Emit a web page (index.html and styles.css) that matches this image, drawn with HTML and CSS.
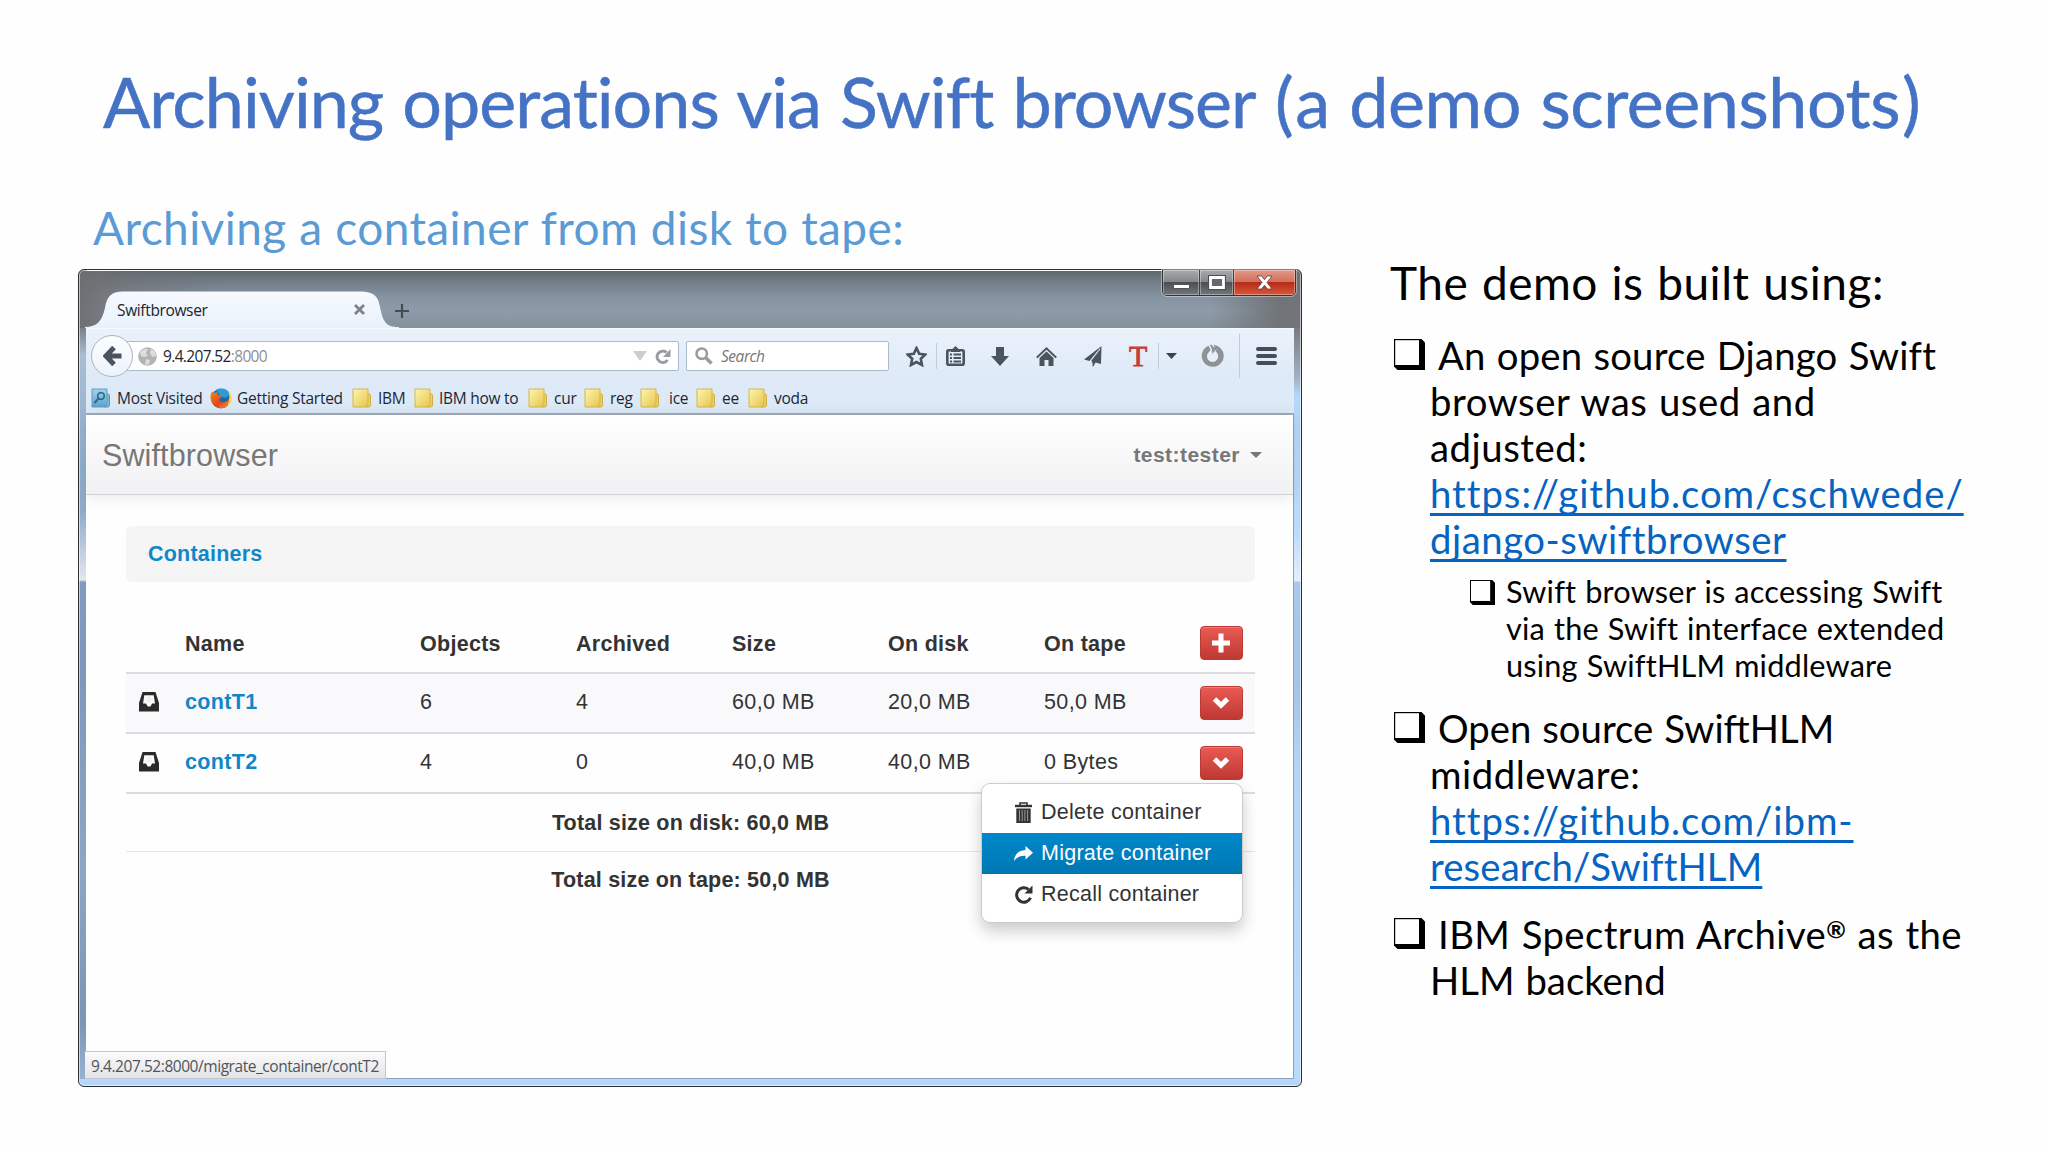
FILE: index.html
```html
<!DOCTYPE html>
<html lang="en">
<head>
<meta charset="utf-8">
<title>Archiving operations via Swift browser</title>
<link rel="stylesheet" href="styles.css">
</head>
<body>
<svg class="defs" width="0" height="0" aria-hidden="true">
  <defs>
    <linearGradient id="tabFill" x1="0" y1="0" x2="0" y2="1"><stop offset="0" stop-color="#f7faff"/><stop offset="1" stop-color="#e8f1fb"/></linearGradient>
    <linearGradient id="folderFill" x1="0" y1="0" x2="1" y2="1"><stop offset="0" stop-color="#fdf5b0"/><stop offset="1" stop-color="#e9c54c"/></linearGradient>
    <linearGradient id="blueFill" x1="0" y1="0" x2="0" y2="1"><stop offset="0" stop-color="#a5d3ea"/><stop offset="1" stop-color="#5fa3c9"/></linearGradient>
    <linearGradient id="foxFill" x1="0" y1="0" x2="1" y2="1"><stop offset="0" stop-color="#f08a1c"/><stop offset=".55" stop-color="#e2451b"/><stop offset="1" stop-color="#f9a23c"/></linearGradient>
  </defs>
  <symbol id="folder" viewBox="0 0 19 20"><path d="M14 6h3q1.500 0 1.500 1.500V17q0 2-2 2H13z" fill="#ecd05e" stroke="#cfae45"/><path d="M1 1h15v14q0 4-3 4H1z" fill="url(#folderFill)" stroke="#d3b84f"/></symbol>
  <symbol id="box" viewBox="0 0 31 31"><path d="M0 0H27.500L31 3.500V31H3.500L0 27.500z" fill="#000"/><path d="M1.200 1.200H25V26H1.200z" fill="#fff"/></symbol>
  <symbol id="inbox" viewBox="0 0 20 20"><path fill-rule="evenodd" d="M3.500 0h13L20 11v8.500H0V11zM5.300 3.200 4 11.500h3l1.700 3h2.700l1.700-3H16L14.700 3.200z" fill="#2b2b2b"/><path d="M8.300 4.500h3.400v3h2L10 11 6.300 7.500h2z" fill="#e5e5e5" opacity=".5"/></symbol>
  <symbol id="chev" viewBox="0 0 20 14"><path d="M2.500 3 9 9.200l6.500-6.200" fill="none" stroke="#fff" stroke-width="5"/></symbol>
</svg>

<h1 class="title">Archiving operations via Swift browser <span class="title-end"><span class="paren">(</span>a demo screenshots<span class="paren">)</span></span></h1>

<main class="slide">
  <section class="demo">
    <h2 class="subtitle">Archiving a container from disk to tape:</h2>
    <div class="window">
      <div class="titlebar">
        <div class="tab">
          <svg class="tab-shape" width="314" height="37" viewBox="0 0 314 37"><path d="M0 37V36C12 36 17 30 20 17 22 5 26 1 38 .500H276C288 1 293 4 295 16 298 31 301 36 314 36V37z" fill="url(#tabFill)"/></svg>
          <span class="tab-name">Swiftbrowser</span>
          <svg width="11" height="11" viewBox="0 0 11 11"><path d="M1 1l9 9M10 1l-9 9" stroke="#7d8288" stroke-width="2.800"/></svg>
        </div>
        <svg class="newtab" width="14" height="14" viewBox="0 0 14 14"><path d="M7 0v14M0 7h14" stroke="#454c54" stroke-width="2.200"/></svg>
        <div class="winbtns">
          <span class="wb wb-min"><svg width="17" height="5" viewBox="0 0 17 5"><path d="M.5.5h16v4H.5z" fill="#fff" stroke="#555"/></svg></span>
          <span class="wb wb-max"><svg width="18" height="15" viewBox="0 0 18 15"><path d="M2 2h14v11H2z" fill="none" stroke="#4a4f52" stroke-width="4"/><path d="M2.500 2.500h13v10h-13z" fill="#62686c" stroke="#fff" stroke-width="2.800"/></svg></span>
          <span class="wb wb-close"><svg width="17" height="15" viewBox="0 0 17 15"><path d="M1 1h4.500l3 3.700L11.500 1H16l-5 6.500L16 14h-4.500l-3-3.700-3 3.700H1l5-6.500z" fill="#fff" stroke="#6d3b35" stroke-width=".8"/></svg></span>
        </div>
      </div>

      <div class="chrome">
        <div class="toolbar">
          <span class="back"><svg width="19" height="20" viewBox="0 0 19 20"><path d="M11 1.500 3 10l8 8.500M3 10h15.500" fill="none" stroke="#4b545c" stroke-width="5"/></svg></span>
          <div class="url">
            <svg width="19" height="19" viewBox="0 0 19 19"><circle cx="9.500" cy="9.500" r="9.300" fill="#b1b3b5"/><path d="M2 5C4 2 8 1 10 2L8 6l2 3-4 1-3-1zM13 2c3 1 5 4 5 7l-4 1-2-4zM8 12l4 1-1 4-4 1z" fill="#dcdddf"/></svg>
            <span class="addr">9.4.207.52<span class="port">:8000</span></span>
            <svg class="drop" width="14" height="10" viewBox="0 0 14 10"><path d="M0 0h14L7 10z" fill="#cbcdcf"/></svg>
            <svg class="reload" width="16" height="17" viewBox="0 0 16 17"><path d="M11.500 4.500A5.700 5.700 0 1 0 12.500 12" fill="none" stroke="#999c9f" stroke-width="3"/><path d="M15.500 1v8H8z" fill="#999c9f"/></svg>
          </div>
          <div class="search">
            <svg width="18" height="18" viewBox="0 0 18 18"><circle cx="6.700" cy="6.700" r="5.200" fill="none" stroke="#9a9da0" stroke-width="2.600"/><path d="M10.500 10.500 16.500 16.500" stroke="#9a9da0" stroke-width="3.600"/></svg>
            <span>Search</span>
          </div>
          <svg class="i-star" width="21" height="21" viewBox="0 0 21 21"><path d="M10.500 2l2.700 5.700 6.200.8-4.600 4.300 1.200 6.200-5.500-3-5.500 3 1.200-6.200L1.600 8.500l6.200-.8z" fill="none" stroke="#4b545c" stroke-width="2.600"/></svg>
          <i class="sep sep-a"></i>
          <svg class="i-clip" width="19" height="20" viewBox="0 0 19 20"><rect x="1.300" y="4.300" width="16.400" height="14.400" rx="1.500" fill="none" stroke="#4b545c" stroke-width="2.600"/><path d="M5 4.500 7.500 2 9.500 0l2 2L14 4.500V6H5z" fill="#4b545c"/><path d="M4 8.500h2M7.500 8.500H15M4 12h2M7.500 12H15M4 15.500h2M7.500 15.500H15" stroke="#4b545c" stroke-width="1.900"/></svg>
          <svg class="i-down" width="18" height="19" viewBox="0 0 18 19"><path d="M5 0h8v9h5l-9 10L0 9h5z" fill="#4b545c"/></svg>
          <svg class="i-home" width="21" height="19" viewBox="0 0 21 19"><path d="M10.500 0 21 10l-1.500 1.200-9-8.500-9 8.500L0 10z" fill="#4b545c"/><path d="M10.500 4.500 17.500 11v8H12.500v-6H8.500v6H3.500v-8z" fill="#4b545c"/></svg>
          <svg class="i-plane" width="18" height="21" viewBox="0 0 18 21"><path d="M17.500 0 0 13.500l5.500 1.500z" fill="#4b545c"/><path d="M17.500 0 7 14.500 9 21l2.500-4.500L17 18z" fill="#4b545c"/><path d="M16 3 7 14.500 8.500 18.500" fill="none" stroke="#dfe9f4" stroke-width="1"/></svg>
          <span class="i-t">T</span>
          <i class="sep sep-b"></i>
          <svg class="i-caret" width="11" height="6" viewBox="0 0 11 6"><path d="M0 0h11L5.500 6z" fill="#3a424a"/></svg>
          <svg class="i-ring" width="23" height="24" viewBox="0 0 23 24"><path fill-rule="evenodd" d="M10 .5 8 1.500A11 11 0 1 0 14.500 1.200L12.500.5 15 5.500 11.500 8.500 9.500 5.500 8.500 7.500A5.500 5.500 0 1 0 14.700 7.500L15.500 5.500 10 .500z" fill="#909396"/><circle cx="11.500" cy="12.500" r="5.300" fill="#e6effa"/><path d="M8 1l2.800 5.500" stroke="#e6effa" stroke-width="1.500"/><path d="M11 2.500 16 4.500 11.300 10z" fill="#909396"/></svg>
          <i class="sep sep-c"></i>
          <svg class="i-menu" width="21" height="18" viewBox="0 0 21 18"><path d="M2 2h17M2 9h17M2 16h17" stroke="#454e57" stroke-width="4" stroke-linecap="round"/></svg>
        </div>
        <div class="bookmarks">
          <svg class="b1" width="19" height="20" viewBox="0 0 19 20"><path d="M14 6h3q1.500 0 1.500 1.500V17q0 2-2 2H13z" fill="#7fb9d8" stroke="#5795b8"/><path d="M1 1h15v14q0 4-3 4H1z" fill="url(#blueFill)" stroke="#5d9fc2"/><circle cx="10" cy="8" r="3.300" fill="none" stroke="#2f6d92" stroke-width="1.700"/><path d="M7.500 10.500 3.500 15" stroke="#2f6d92" stroke-width="2.200"/></svg>
          <span class="t1">Most Visited</span>
          <svg class="b2" width="22" height="21" viewBox="0 0 22 21"><circle cx="11" cy="10.500" r="9.800" fill="#1b66a8"/><path d="M6 2C11-1 18 1 20 6l-4 4-6-2z" fill="#2f9ad4"/><path d="M2 3.500C-.5 7 0 14 4 17.500c5 4.500 14 3.500 16.500-4C21.500 10 21 7 19.500 5c.5 4-1 8-4.500 9-4 .800-6.500-1-5.500-3.500l3-1C11 7 9 7.500 8 7L7 4 4 5z" fill="url(#foxFill)"/><path d="M18.500 3.500c3.500 3 4 8 1.500 12l-3 3c2.500-5 3-9 1.500-15z" fill="#f8d25a"/></svg>
          <span class="t2">Getting Started</span>
          <svg class="f f1" width="19" height="20"><use href="#folder"/></svg><span class="t3">IBM</span>
          <svg class="f f2" width="19" height="20"><use href="#folder"/></svg><span class="t4">IBM how to</span>
          <svg class="f f3" width="19" height="20"><use href="#folder"/></svg><span class="t5">cur</span>
          <svg class="f f4" width="19" height="20"><use href="#folder"/></svg><span class="t6">reg</span>
          <svg class="f f5" width="19" height="20"><use href="#folder"/></svg><span class="t7">ice</span>
          <svg class="f f6" width="19" height="20"><use href="#folder"/></svg><span class="t8">ee</span>
          <svg class="f f7" width="19" height="20"><use href="#folder"/></svg><span class="t9">voda</span>
        </div>
      </div>

      <div class="page">
        <div class="navbar">
          <span class="brand">Swiftbrowser</span>
          <span class="user">test:tester <svg width="12" height="6" viewBox="0 0 12 6"><path d="M0 0h12L6 6z" fill="#777"/></svg></span>
        </div>
        <div class="content">
          <div class="crumb">Containers</div>
          <div class="table">
            <div class="row head"><span></span><span>Name</span><span>Objects</span><span>Archived</span><span>Size</span><span>On disk</span><span>On tape</span><span class="btn"><svg width="20" height="20" viewBox="0 0 20 20"><path d="M9 .500v19M0 10h18" stroke="#fff" stroke-width="5"/></svg></span></div>
            <div class="row odd"><svg class="inbox" width="20" height="20"><use href="#inbox"/></svg><span class="name">contT1</span><span>6</span><span>4</span><span>60,0 MB</span><span>20,0 MB</span><span>50,0 MB</span><span class="btn"><svg width="20" height="14"><use href="#chev"/></svg></span></div>
            <div class="row"><svg class="inbox" width="20" height="20"><use href="#inbox"/></svg><span class="name">contT2</span><span>4</span><span>0</span><span>40,0 MB</span><span>40,0 MB</span><span>0 Bytes</span><span class="btn"><svg width="20" height="14"><use href="#chev"/></svg></span></div>
            <div class="total first">Total size on disk: 60,0 MB</div>
            <div class="total">Total size on tape: 50,0 MB</div>
          </div>
        </div>
        <div class="menu">
          <div class="item"><svg width="19" height="21" viewBox="0 0 19 21"><path d="M6 3V1h7v2" fill="none" stroke="#333" stroke-width="1.600"/><path d="M1 2.800h17v2.400H1z" fill="#333"/><path d="M2.300 6.500h14.400V21H2.300z" fill="#333"/><path d="M5.500 8v11M8.200 8v11M10.900 8v11M13.600 8v11" stroke="#9a9a9a" stroke-width="1"/></svg>Delete container</div>
          <div class="item active"><svg width="19" height="15" viewBox="0 0 19 15"><path d="M11.500 0 19 6.800l-7.500 6.700V9.700C6 9.500 3 11 0 15 .300 8.500 4.500 4.200 11.500 3.900z" fill="#fff"/></svg>Migrate container</div>
          <div class="item"><svg width="19" height="19" viewBox="0 0 19 19"><path d="M14.500 4.500A7.200 7.200 0 1 0 16.500 12.700" fill="none" stroke="#333" stroke-width="3"/><path d="M18.500.500v8h-8z" fill="#333"/></svg>Recall container</div>
        </div>
        <div class="status">9.4.207.52:8000/migrate_container/contT2</div>
      </div>
    </div>
  </section>

  <section class="notes">
    <h2 class="lead">The demo is built using:</h2>
    <ul class="list">
      <li class="pt">
        <div class="first-line"><svg class="bullet" width="31" height="31"><use href="#box"/></svg><span>An open source Django Swift</span></div>
        <div class="wide">browser was used and</div>
        <div class="wide">adjusted:</div>
        <div><a class="url-a">https://github.com/cschwede/</a></div>
        <div><a class="url-b">django-swiftbrowser</a></div>
      </li>
      <li class="sub">
        <div class="first-line"><svg class="bullet" width="25" height="25" viewBox="0 0 31 31"><use href="#box"/></svg><span>Swift browser is accessing Swift</span></div>
        <div>via the Swift interface extended</div>
        <div>using SwiftHLM middleware</div>
      </li>
      <li class="pt second">
        <div class="first-line"><svg class="bullet" width="31" height="31"><use href="#box"/></svg><span class="tight">Open source SwiftHLM</span></div>
        <div class="wide">middleware:</div>
        <div><a class="url-a">https://github.com/ibm-</a></div>
        <div><a class="url-c">research/SwiftHLM</a></div>
      </li>
      <li class="pt third">
        <div class="first-line"><svg class="bullet" width="31" height="31"><use href="#box"/></svg><span class="mark-line">IBM Spectrum Archive<span class="reg">®</span> as the</span></div>
        <div class="tight">HLM backend</div>
      </li>
    </ul>
  </section>
</main>
</body>
</html>
```
FILE: styles.css
```css
* { box-sizing: border-box; }
body { margin: 0; width: 2048px; height: 1152px; overflow: hidden; background: #fefefe; font-family: Lato, Carlito, sans-serif; color: #000; }
svg { display: block; flex: none; }
.defs { position: absolute; }
h1, h2, ul { margin: 0; padding: 0; font-weight: 400; list-style: none; }

.title { margin: 56px 0 0 103px; font-size: 70px; line-height: 90px; letter-spacing: -.0138em; word-spacing: .03em; color: #4472c4; white-space: nowrap; -webkit-text-stroke: .5px #4472c4; }
.title-end { letter-spacing: -.0065em; }
.paren { margin: 0 2px; }
.slide { display: flex; margin-top: 56px; padding-left: 78px; }
.demo { width: 1224px; flex: none; }
.subtitle { padding-left: 15px; font-size: 46px; line-height: 51px; margin-bottom: -1px; letter-spacing: .009em; word-spacing: .01em; color: #5b9bd5; white-space: nowrap; }

/* Browser window */
.window {
  display: flex; flex-direction: column; width: 1224px; height: 818px; margin-top: 17px; padding: 0 7px 7px;
  border: 1px solid #2c3036; border-radius: 6px;
  background:
    linear-gradient(#b9dafc, #b4d3f7) bottom / 100% 7px no-repeat,
    linear-gradient(#77797c 0, #77797c 55px, #a9bdd3 85px, #8fb0d0 200px, #8ea9c8 240px, #e3e7ee 310px, #7f9bbd 312px, #7d98ba 400px, #8ba6c6 600px, #7b95b5 750px, #9ab5d8 100%) left / 8px 100% no-repeat,
    linear-gradient(#66696d 0, #77797c 55px, #a3b4c8 110px, #b3d6fb 125px, #b9dafb 260px, #e4f0fb 311px, #a9c8eb 312px, #a7c4e6 420px, #b5d5f8 500px, #b9dafc 100%) right / 8px 100% no-repeat;
  box-shadow: inset 0 0 0 1px rgba(255,255,255,.55);
}
.titlebar {
  display: flex; flex: none; height: 57px; margin: 1px -6px 0; padding-left: 7px; border-radius: 5px 5px 0 0; position: relative;
  background:
    linear-gradient(90deg, rgba(110,110,113,.95) 0, rgba(110,110,113,.5) 45px, rgba(110,110,113,0) 150px, rgba(110,110,113,0) 1130px, rgba(110,112,115,.9) 1200px),
    linear-gradient(#5e676b 0, #707c86 10px, #8693a1 26px, #8e9baa 40px, #83919b 100%);
}
.tab { position: relative; display: flex; align-items: center; width: 314px; height: 37px; margin: 20px 0 0 -2px; }
.tab > * { position: relative; }
.tab > .tab-shape { position: absolute; inset: 0; }
.tab-name { width: 237px; margin-left: 32px; font: 15.5px/20px "Open Sans", sans-serif; letter-spacing: -.023em; color: #20242a; }
.newtab { margin: 33px 0 0 -4px; }
.winbtns { position: absolute; right: 4px; top: -1px; display: flex; height: 26px; border: 1px solid #30353a; outline: 1px solid rgba(255,255,255,.4); border-top: 0; border-radius: 0 0 5px 5px; overflow: hidden; }
.wb { display: flex; align-items: center; justify-content: center; height: 100%; border-right: 1px solid #3c4145; background: linear-gradient(#a9acae 0, #83878a 48%, #4b5053 50%, #71777b 100%); box-shadow: inset 0 0 0 1px rgba(255,255,255,.35); }
.wb-min { width: 37px; padding-top: 8px; }
.wb-max { width: 34px; }
.wb-close { width: 61px; border-right: 0; background: linear-gradient(#e09a88 0, #d4705c 46%, #b92b16 50%, #d4593d 100%); }

.chrome { flex: none; height: 87px; background: linear-gradient(#eaf2fb, #dfeaf7 45px, #dce9f7); border-top: 1px solid #f4faff; border-bottom: 2px solid #a3abba; }
.toolbar { display: flex; align-items: center; height: 55px; padding-bottom: 1px; }
.back { position: relative; z-index: 1; display: flex; align-items: center; justify-content: center; width: 42px; height: 42px; margin-left: 5px; border: 1.500px solid #a9b4c2; border-radius: 50%; background: linear-gradient(#fbfdff, #eef3fa); flex: none; }
.url { display: flex; align-items: center; width: 555px; height: 30px; margin-left: -9px; padding-left: 13px; border: 1px solid #a9bace; border-radius: 2px; background: #fff; flex: none; }
.addr { width: 470px; margin-left: 6px; font: 15.5px/20px "Open Sans", sans-serif; letter-spacing: -.042em; color: #22262b; }
.port { color: #8c9094; }
.reload { margin-left: 8px; }
.search { display: flex; align-items: center; gap: 8px; width: 203px; height: 30px; margin-left: 7px; padding-left: 8px; border: 1px solid #a9bace; border-radius: 2px; background: #fff; font: italic 15.5px/20px "Open Sans", sans-serif; letter-spacing: -.03em; color: #777; flex: none; }
.i-star { margin-left: 17px; }
.sep { width: 1px; height: 26px; background: #c0ccda; flex: none; }
.sep-a { margin-left: 9px; }
.i-clip { margin-left: 9px; }
.i-down { margin-left: 26px; }
.i-home { margin-left: 27px; }
.i-plane { margin-left: 27px; }
.i-t { width: 18px; margin-left: 28px; font: 30px/30px "Liberation Serif", serif; color: #c63e31; text-indent: -1px; -webkit-text-stroke: .8px #c63e31; }
.sep-b { margin-left: 10px; }
.i-caret { margin-left: 7px; }
.i-ring { margin-left: 24px; }
.sep-c { height: 44px; margin-left: 15px; }
.i-menu { margin-left: 16px; }

.bookmarks { display: flex; align-items: center; height: 28px; font: 15.5px/20px "Open Sans", sans-serif; letter-spacing: -.016em; color: #1d2733; white-space: nowrap; }
.bookmarks span { flex: none; }
.b1 { margin-left: 5px; }
.t1 { width: 93px; margin-left: 7px; }
.t2 { width: 115px; margin-left: 5px; }
.t3 { width: 36px; margin-left: 7px; }
.t4 { width: 89px; margin-left: 6px; letter-spacing: -.018em; }
.t5 { width: 30px; margin-left: 7px; }
.t6 { width: 30px; margin-left: 7px; }
.t7 { width: 27px; margin-left: 10px; }
.t8 { width: 26px; margin-left: 7px; }
.t9 { margin-left: 7px; }

/* Page inside the browser */
.page { position: relative; display: flex; flex-direction: column; flex: 1; background: #fefefe; font-family: "Liberation Sans", Arial, sans-serif; color: #333; border: solid #8ba3bf; border-width: 0 1px 1px 0; }
.navbar { display: flex; align-items: center; justify-content: space-between; height: 80px; padding: 0 31px 0 16px; border-bottom: 1px solid #d2d2d4; background: linear-gradient(#fff, #f1f1f3); box-shadow: 0 1px 15px rgba(0,0,0,.1); color: #777; }
.brand { font-size: 30.5px; line-height: 40px; letter-spacing: .004em; }
.user { display: flex; align-items: center; gap: 10px; font-size: 21px; line-height: 28px; font-weight: 700; letter-spacing: .022em; }
.content { padding: 31px 38px 0 40px; font-size: 21.500px; line-height: 26px; }
.crumb { width: 1129px; height: 56px; padding: 15px 0 0 22px; border-radius: 6px; background: #f5f5f6; font-weight: 700; letter-spacing: .01em; color: #0f87c9; }
.table { width: 1129px; margin-top: 30px; }
.row { display: grid; grid-template-columns: 59px 235px 156px 156px 156px 156px 156px 55px; align-items: center; height: 60px; border-bottom: 2px solid #dcdcdf; letter-spacing: .018em; }
.row > span:not(.btn) { padding-bottom: 3px; }
.head { height: 62px; font-weight: 700; letter-spacing: .013em; }
.head > span:not(.btn) { padding: 3px 0 0; }
.head > .btn { margin-top: 1px; }
.odd { background: #f9f9fb; }
.inbox { margin-left: 13px; margin-top: -2px; }
.name { font-weight: 700; letter-spacing: .015em; color: #0f87c9; }
.btn { display: flex; align-items: center; justify-content: center; width: 43px; height: 34px; border: 1px solid #bd3a34; border-radius: 4px; background: linear-gradient(#ea5a54, #bf3832); box-shadow: inset 0 1px 0 rgba(255,255,255,.2); }
.total { height: 56px; padding-top: 15px; text-align: center; font-weight: 700; letter-spacing: .009em; }
.total.first { height: 58px; padding-top: 16px; border-bottom: 1.500px solid #e6e6e8; }

.menu { position: absolute; left: 895px; top: 368px; width: 262px; height: 140px; padding: 8px 0; border: 1px solid #ccc; border-radius: 9px; background: #fff; box-shadow: 0 8px 15px rgba(0,0,0,.2); font-size: 21.5px; letter-spacing: .012em; }
.item { display: flex; align-items: center; gap: 8px; height: 41px; padding: 0 0 1px 32px; white-space: nowrap; }
.item.active { background: linear-gradient(#0088cc, #0077b3); color: #fff; }
.status { position: absolute; left: -1px; bottom: -1px; width: 301px; height: 28px; padding: 4px 0 0 6px; border: 1px solid #c6c6ca; border-left: 0; background: linear-gradient(#fbfbfb, #e4e4e7); font: 15.5px/20px "Open Sans", sans-serif; letter-spacing: -.029em; color: #50545a; white-space: nowrap; }

/* Notes */
.notes { padding: 56px 0 0 88px; white-space: nowrap; }
.lead { font-size: 46px; line-height: 50px; letter-spacing: .011em; word-spacing: .03em; }
.list { margin-top: 24px; }
.pt { padding-left: 40px; font-size: 38.3px; line-height: 46px; letter-spacing: .005em; word-spacing: .03em; }
.first-line { display: flex; align-items: flex-start; gap: 13px; }
.pt .first-line { margin-left: -36px; }
.pt .bullet { margin-top: 7px; }
.wide { letter-spacing: .014em; }
.tight { letter-spacing: 0; }
.mark-line { letter-spacing: .011em; }
.reg { display: inline-block; font-size: .62em; font-weight: 700; line-height: 0; vertical-align: .5em; }
a { color: #0563c1; text-decoration: underline; text-decoration-thickness: 2.500px; text-underline-offset: 5px; text-decoration-skip-ink: none; }
.url-a { letter-spacing: .025em; }
.url-b { letter-spacing: .014em; }
.url-c { letter-spacing: .003em; }
.sub { margin-top: 12px; padding-left: 116px; font-size: 30.7px; line-height: 36.8px; letter-spacing: .006em; word-spacing: .03em; }
.sub .first-line { margin-left: -36px; gap: 11px; }
.sub .bullet { margin-top: 6px; }
.second { margin-top: 21px; }
.third { margin-top: 22px; }
```
